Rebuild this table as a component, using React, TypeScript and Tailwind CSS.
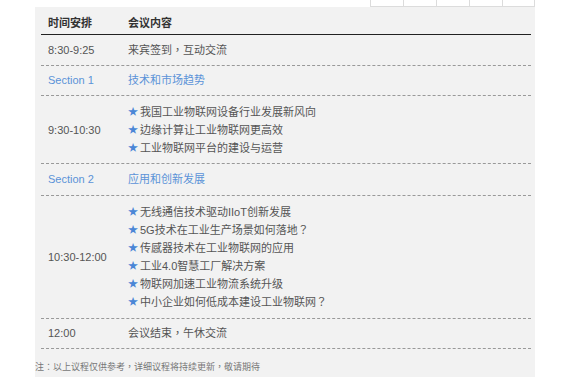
const blocks = [
  {
    id: "1",
    time: "8:30-9:25",
    items: ["来宾签到，互动交流"],
    h: "h-[31px]",
  },
  {
    id: "2",
    time: "Section 1",
    items: ["技术和市场趋势"],
    section: true,
    h: "h-[30px]",
  },
  {
    id: "3",
    time: "9:30-10:30",
    items: [
      "我国工业物联网设备行业发展新风向",
      "边缘计算让工业物联网更高效",
      "工业物联网平台的建设与运营",
    ],
    star: true,
    h: "pt-[7px] pb-[6px]",
  },
  {
    id: "4",
    time: "Section 2",
    items: ["应用和创新发展"],
    section: true,
    h: "h-[32px]",
  },
  {
    id: "5",
    time: "10:30-12:00",
    items: [
      "无线通信技术驱动IIoT创新发展",
      "5G技术在工业生产场景如何落地？",
      "传感器技术在工业物联网的应用",
      "工业4.0智慧工厂解决方案",
      "物联网加速工业物流系统升级",
      "中小企业如何低成本建设工业物联网？",
    ],
    star: true,
    h: "pt-[7px] pb-[7px]",
  },
  {
    id: "6",
    time: "12:00",
    items: ["会议结束，午休交流"],
    h: "h-[30px]",
  },
];

export default function App() {
  return (
    <div className="w-[582px] h-[387px] bg-white font-['Liberation_Sans','Noto_Sans_CJK_TC',sans-serif] text-[11px] text-[#555] overflow-hidden">
      {/* top pager remnant */}
      <div className="flex justify-end w-[500px] ml-[35px] h-[7px]">
        {[0, 1, 2, 3, 4].map((i) => (
          <div
            key={i}
            className={
              "w-[33px] h-[7px] border-l border-b border-[#dcdcdc]" +
              (i === 4 ? " border-r" : "")
            }
          />
        ))}
      </div>

      <div className="ml-[35px] w-[500px] h-[370px] bg-[#f2f2f2] pt-[6px]">
        <div className="ml-[6px] w-[490px]">
          <div className="grid grid-cols-[80px_1fr] h-[22px] items-center border-b border-[#222] font-bold text-[#333]">
            <div className="pl-[7px]">时间安排</div>
            <div className="pl-[7px]">会议内容</div>
          </div>

          {blocks.map((b) => (
            <div
              key={b.id}
              className={
                "grid grid-cols-[80px_1fr] items-center border-b border-dashed border-[#999] " +
                b.h +
                (b.section ? " text-[#5b93d8]" : "")
              }
            >
              <div className="pl-[7px]">{b.time}</div>
              <div className="pl-[7px]">
                {b.items.map((item) => (
                  <div key={item} className="flex items-center h-[18px] whitespace-nowrap">
                    {b.star && (
                      <span className="w-[12px] shrink-0 text-[#4a86d6] text-[10px] leading-none">★</span>
                    )}
                    <span>{item}</span>
                  </div>
                ))}
              </div>
            </div>
          ))}
        </div>

        <div className="pt-[11px] leading-[14px] text-[9px] text-[#777] whitespace-nowrap">
          注：以上议程仅供参考，详细议程将持续更新，敬请期待
        </div>
      </div>
    </div>
  );
}
